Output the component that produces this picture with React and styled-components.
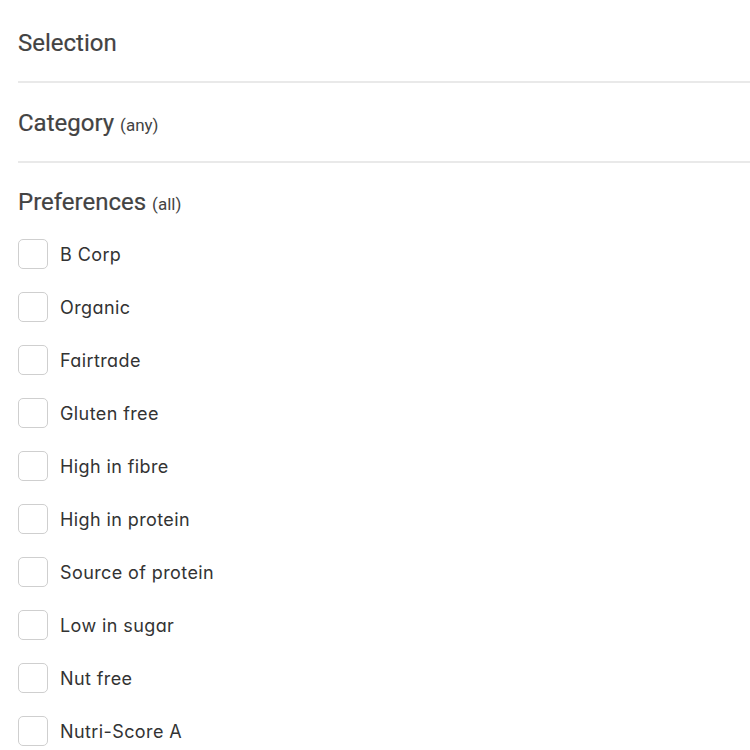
import React from 'react'
import styled, { createGlobalStyle } from 'styled-components'

const GlobalStyle = createGlobalStyle`
    html, body {
        margin: 0;
        padding: 0;
        background: #fff;
    }
`

export const FilterPanel = styled.div`
    display: flex;
    flex-direction: column;
    padding-top: 3px;
    padding-left: 18px;
    width: 100%;
    box-sizing: border-box;
`

export const FilterSection = styled.div`
    display: flex;
    flex-direction: column;
    border-bottom: ${props => (props.last ? 'none' : '2px solid #e9e9e9')};
    padding-top: ${props => (props.last ? '24px' : '25px')};
    height: ${props => (props.last ? 'auto' : '80px')};
    box-sizing: border-box;
`

export const SectionTitle = styled.div`
    font-family: Roboto, "Liberation Sans", sans-serif;
    font-size: 24px;
    font-weight: 400;
    color: #434343;
    line-height: 30px;
    -webkit-text-stroke: 0.2px #434343;

    span {
        font-size: 17px;
        margin-left: 0;
        -webkit-text-stroke: 0;
    }
`

export const OptionList = styled.div`
    display: flex;
    flex-direction: column;
    gap: 23px;
    margin-top: 20px;
`

export const OptionRow = styled.label`
    display: flex;
    align-items: center;
    gap: 12px;
    cursor: pointer;
`

export const CheckBox = styled.span`
    width: 30px;
    height: 30px;
    box-sizing: border-box;
    border: 1.5px solid #cfcfcf;
    border-radius: 5px;
    background: #fff;
    flex-shrink: 0;
`

export const OptionLabel = styled.span`
    font-family: Inter, "Noto Sans", sans-serif;
    font-feature-settings: "cv11";
    font-size: 18px;
    color: #333;
    letter-spacing: 0.4px;
`

const preferences = [
    'B Corp',
    'Organic',
    'Fairtrade',
    'Gluten free',
    'High in fibre',
    'High in protein',
    'Source of protein',
    'Low in sugar',
    'Nut free',
    'Nutri-Score A',
]

const App = () => {
    return (
        <>
            <GlobalStyle />
            <FilterPanel>
                <FilterSection>
                    <SectionTitle>Selection</SectionTitle>
                </FilterSection>
                <FilterSection>
                    <SectionTitle>Category <span>(any)</span></SectionTitle>
                </FilterSection>
                <FilterSection last>
                    <SectionTitle>Preferences <span>(all)</span></SectionTitle>
                    <OptionList>
                        {preferences.map(p => (
                            <OptionRow key={p}>
                                <CheckBox />
                                <OptionLabel>{p}</OptionLabel>
                            </OptionRow>
                        ))}
                    </OptionList>
                </FilterSection>
            </FilterPanel>
        </>
    )
}

export default App
